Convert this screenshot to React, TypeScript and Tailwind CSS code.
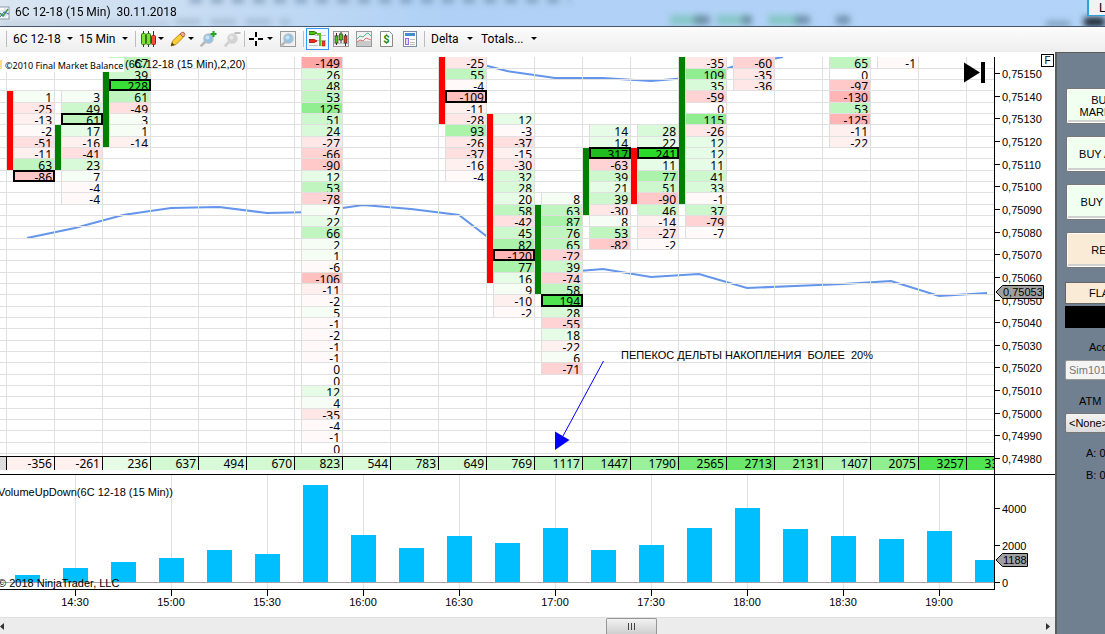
import React from 'react';

interface Footprint {
    col: number;
    start: number;
    values: number[];
    poc?: number;
    body?: { from: number; to: number; up: boolean };
}

const COL_X = 6;
const COL_W = 48;
const AXIS_X = 994;

const colX = (col: number) => COL_X + col * COL_W;
const rowY = (row: number) => Math.floor(68.32 + 11.33 * (row - 1));

const footprints: Footprint[] = [
    { col: 0, start: 3, values: [1, -25, -13, -2, -51, -11, 63, -86], poc: 10, body: { from: 3, to: 9, up: false } },
    { col: 1, start: 3, values: [3, 49, 61, 17, -16, -41, 23, 7, -4, -4], poc: 5, body: { from: 6, to: 9, up: true } },
    { col: 2, start: 0, values: [67, 39, 228, 61, -49, 3, 1, -14], poc: 2, body: { from: 1, to: 7, up: true } },
    {
        col: 6,
        start: 0,
        values: [
            -149, 26, 48, 53, 125, 51, 24, -27, -66, -90, 12, 53, -78, 7, 22, 66, 2, 1, -6, -106, -11, -2, 5, -1, -2, -1, -1, 0, 0, 12, 4, -35, -4,
            -1, 0,
        ],
    },
    { col: 9, start: 0, values: [-25, 55, -4, -109, -11, -28, 93, -26, -37, -16, -4], poc: 3, body: { from: 0, to: 5, up: false } },
    {
        col: 10,
        start: 5,
        values: [12, -3, -37, -15, -30, 32, 28, 20, 58, -42, 45, 82, -120, 77, 16, 9, -10, -2],
        poc: 17,
        body: { from: 5, to: 19, up: false },
    },
    {
        col: 11,
        start: 12,
        values: [8, 63, 87, 76, 65, -72, 39, -74, 58, 194, 28, -55, 18, -22, 6, -71],
        poc: 21,
        body: { from: 13, to: 20, up: true },
    },
    { col: 12, start: 6, values: [14, 14, 317, -63, 39, 21, 39, -30, 8, 53, -82], poc: 8, body: { from: 8, to: 13, up: true } },
    { col: 13, start: 6, values: [28, 22, 241, 11, 77, 51, -90, 46, -14, -27, -2], poc: 8, body: { from: 8, to: 12, up: false } },
    {
        col: 14,
        start: 0,
        values: [-35, 109, 35, -59, 0, 115, -26, 12, 12, 11, 41, 33, -1, 37, -79, -7],
        body: { from: 0, to: 12, up: true },
    },
    { col: 15, start: 0, values: [-60, -35, -36] },
    { col: 17, start: 0, values: [65, 0, -97, -130, 53, -125, -11, -22] },
    { col: 18, start: 0, values: [-1] },
];

const greens: [number, string][] = [
    [300, '#20bc20'],
    [235, '#2ad92a'],
    [210, '#38e038'],
    [150, '#50e650'],
    [100, '#90ee90'],
    [77, '#abf2ab'],
    [53, '#c0f5c0'],
    [37, '#cdf8cd'],
    [23, '#d9fad9'],
    [10, '#e6fce6'],
    [1, '#f5fdf5'],
];

const reds: [number, string][] = [
    [140, '#ffa6a6'],
    [115, '#ffb5b5'],
    [98, '#ffc0c0'],
    [82, '#ffc9c9'],
    [54, '#ffd3d3'],
    [37, '#ffdfdf'],
    [25, '#ffe7e7'],
    [10, '#fff0f0'],
    [1, '#fff9f9'],
];

const deltaColor = (value: number) => {
    if (value === 0) return '#ffffff';
    const scale = value > 0 ? greens : reds;
    return scale.find(([min]) => Math.abs(value) >= min)![1];
};

const totals: [number, string][] = [
    [-356, '#fff0f0'],
    [-261, '#fff0f0'],
    [236, '#e6fce6'],
    [637, '#d2f9d2'],
    [494, '#d9fad9'],
    [670, '#d2f9d2'],
    [823, '#c6f6c6'],
    [544, '#d9fad9'],
    [783, '#cdf8cd'],
    [649, '#d2f9d2'],
    [769, '#cdf8cd'],
    [1117, '#bbf5bb'],
    [1447, '#a8f2a8'],
    [1790, '#9bf09b'],
    [2565, '#76ea76'],
    [2713, '#6be86b'],
    [2131, '#8eee8e'],
    [1407, '#b4f4b4'],
    [2075, '#90ee90'],
    [3257, '#50e550'],
    [3312, '#50e550'],
];

// top edge of every volume bar, the base line is at 582
const volumeTops = [575, 568, 562, 558, 550, 554, 485, 535, 548, 536, 543, 528, 550, 545, 528, 508, 529, 536, 539, 531, 560];

const times = ['14:30', '15:00', '15:30', '16:00', '16:30', '17:00', '17:30', '18:00', '18:30', '19:00'];

const prices = Array.from({ length: 18 }, (_, i) => ({
    label: `0,${75150 - i * 10}`,
    y: Math.floor(73.5 + i * 22.65),
}));

const averages = [
    '27,238 75,228 123,215 171,208 219,207 267,213 315,212 363,205 411,209 459,215 507,252',
    '480,64 507,71 555,78 603,78 651,81 699,77 735,66 783,57',
    '555,273 603,269 651,277 699,274 747,288 795,286 843,284 891,281 939,296 987,293',
];

const FootprintColumn: React.FC<Footprint> = ({ col, start, values, poc, body }) => {
    const x = colX(col);
    const top = Math.max(57, rowY(start));
    return (
        <g>
            <rect x={x + 7} y={top} width={1} height={rowY(start + values.length) - top} fill="#dedede" />
            {body && (
                <rect
                    x={x + 1}
                    y={Math.max(57, rowY(body.from) + 1)}
                    width={6}
                    height={rowY(body.to + 1) - Math.max(57, rowY(body.from) + 1)}
                    fill={body.up ? '#008000' : '#ff0000'}
                />
            )}
            {values.map((value, i) => {
                const y = rowY(start + i);
                const h = rowY(start + i + 1) - y;
                return (
                    <svg key={i} x={x + 8} y={Math.max(57, y + 1)} width={40} height={y < 57 ? 11 : h - 1}>
                        {value !== 0 && <rect width="40" height="12" fill={deltaColor(value)} />}
                        <text x="38" y="11" textAnchor="end">
                            {value}
                        </text>
                    </svg>
                );
            })}
            {poc !== undefined && (
                <rect x={x + 8} y={rowY(poc) + 1} width={40} height={rowY(poc + 1) - rowY(poc) - 1} fill="none" stroke="#000" strokeWidth="2" />
            )}
        </g>
    );
};

const Chart = () => (
    <svg viewBox="0 52 1055 565" className="block h-auto w-full bg-white font-['Liberation_Sans',Arial,sans-serif] text-[11px]">
        <defs>
            <clipPath id="plot">
                <rect x="0" y="57" width={AXIS_X} height="532" />
            </clipPath>
        </defs>

        <g clipPath="url(#plot)">
            {averages.map((points) => (
                <polyline key={points} points={points} fill="none" stroke="#6495ed" strokeWidth="2" />
            ))}
            <g fill="#e0e0e0">
                {Array.from({ length: 35 }, (_, i) => (
                    <rect key={i} x="0" y={rowY(i + 1)} width={AXIS_X} height="1" />
                ))}
                {totals.map((_, i) => (
                    <rect key={i} x={colX(i)} y="57" width="1" height="399" />
                ))}
                {times.map((time, i) => (
                    <rect key={time} x={75 + i * 96} y="475" width="1" height="114" />
                ))}
            </g>

            <g className="font-['Noto_Sans',sans-serif] text-xs">
                {footprints.map((footprint) => (
                    <FootprintColumn key={footprint.col} {...footprint} />
                ))}

                <rect x="0" y="457" width="6" height="13" fill="#dcdcdc" />
                {totals.map(([value, color], i) => (
                    <g key={i}>
                        <rect x={colX(i)} y="457" width={COL_W} height="13" fill={color} />
                        <rect x={colX(i)} y="457" width="1" height="13" />
                        <text x={colX(i) + 46} y="468" textAnchor="end">
                            {value}
                        </text>
                    </g>
                ))}
            </g>
            <rect x="0" y="456" width={AXIS_X} height="1" />

            {volumeTops.map((y, i) => (
                <rect key={i} x={15 + i * COL_W} y={y} width="25" height={582 - y} fill="#00bfff" />
            ))}
            <rect x="0" y="582" width={AXIS_X} height="1" fill="#a4a4a4" />
        </g>

        <text x="125" y="68">
            (6C 12-18 (15 Min),2,20)
        </text>
        <rect x="0" y="60" width="3" height="9" fill="#ffd98c" />
        <rect x="2" y="58" width="122" height="14" fill="#fff" />
        <text x="5" y="69" className="font-['Noto_Sans',sans-serif] text-[9px]">
            ©2010 Final Market Balance
        </text>
        <text x="-2" y="496">
            VolumeUpDown(6C 12-18 (15 Min))
        </text>
        <text x="-2" y="587">
            © 2018 NinjaTrader, LLC
        </text>

        <text x="621" y="359" xmlSpace="preserve">
            {'ПЕПЕКОС ДЕЛЬТЫ НАКОПЛЕНИЯ  БОЛЕЕ  20%'}
        </text>
        <path d="M603.500 361L563 436" stroke="#0000ff" fill="none" />
        <path d="M555 431.500L569.500 440L555 450Z" fill="#0000ff" />

        {/* jump to last bar */}
        <path d="M964 62.500L980 72.500L964 82.500Z" />
        <rect x="981" y="62" width="4" height="21" />

        {/* axes */}
        <rect x={AXIS_X} y="57" width="1" height="533" />
        <rect x="0" y="589" width={AXIS_X} height="1" />
        <rect x="0" y="474" width="1055" height="1" />
        {prices.map(({ label, y }) => (
            <g key={label}>
                <rect x={AXIS_X} y={y} width="6" height="1" />
                <text x="1002" y={y + 5}>
                    {label}
                </text>
            </g>
        ))}
        {[4000, 2000, 0].map((volume, i) => (
            <g key={volume}>
                <rect x={AXIS_X} y={508 + i * 37} width="6" height="1" />
                <text x="1002" y={513 + i * 37}>
                    {volume}
                </text>
            </g>
        ))}
        {times.map((time, i) => (
            <g key={time}>
                <rect x={75 + i * 96} y="589" width="1" height="7" />
                <text x={75 + i * 96} y="606" textAnchor="middle">
                    {time}
                </text>
            </g>
        ))}

        <path d="M996 292L1002.500 285.500H1043.500V298.500H1002.500Z" fill="#a0a0a0" stroke="#000" />
        <text x="1003" y="296">
            0,75053
        </text>
        <path d="M996 560L1002.500 553.500H1027.500V566.500H1002.500Z" fill="#a0a0a0" stroke="#000" />
        <text x="1003" y="564">
            1188
        </text>

        <rect x="1041.500" y="54.500" width="12" height="12" fill="#fff" stroke="#000" />
        <text x="1047.500" y="64" textAnchor="middle" className="text-[10px]">
            F
        </text>
    </svg>
);

const Caret = () => (
    <svg width="6" height="3" viewBox="0 0 6 3" className="shrink-0">
        <path d="M0 0H6L3 3Z" />
    </svg>
);

const Separator = () => <div className="h-4 w-px shrink-0 bg-[#bdbdbd]" />;

const Glass = () => (
    <>
        <path d="M1.500 14.500L5 11" stroke="#b8b8b8" strokeWidth="2.500" strokeLinecap="round" />
        <circle cx="8.500" cy="7.500" r="4.500" fill="#93c4e8" stroke="#b4bfc8" strokeWidth="1.500" />
        <circle cx="7.500" cy="6.500" r="2" fill="#c8e4f8" />
    </>
);

const CandlesIcon = () => (
    <svg width="15" height="16" viewBox="0 0 15 16">
        <path d="M2.500 0V16M7.500 0V16M12.500 0V16" stroke="#333" />
        <rect x="0.500" y="2.500" width="4" height="11" rx="1" fill="#7be03c" stroke="#2f7d12" />
        <rect x="5.500" y="2.500" width="4" height="11" rx="1" fill="#7be03c" stroke="#2f7d12" />
        <rect x="10.500" y="4.500" width="4" height="9" rx="1" fill="#f0503c" stroke="#94241a" />
    </svg>
);

const PencilIcon = () => (
    <svg width="16" height="16" viewBox="0 0 16 16">
        <path d="M1 15L2.500 10L11 2L14.500 5L6 13.500Z" fill="#fcd034" stroke="#b98a14" />
        <path d="M10 3L11.500 1.500Q13 0.500 14.500 2Q15.500 3.500 14.500 4.500L13 6Z" fill="#f2a58e" stroke="#b06a50" />
        <path d="M1 15L2 11.500L4.500 14Z" fill="#463a20" />
    </svg>
);

const FrameIcon: React.FC<{ children: React.ReactNode }> = ({ children }) => (
    <svg width="16" height="16" viewBox="0 0 16 16">
        <rect x="0.500" y="0.500" width="15" height="15" fill="#f1f1f1" stroke="#9a9a9a" />
        {children}
    </svg>
);

const toolButton = 'flex h-[22px] shrink-0 items-center justify-center';

const Picker: React.FC<{ label: string; value: string }> = ({ label, value }) => (
    <label className="flex shrink-0 items-center gap-1.5">
        <select aria-label={label} className="appearance-none bg-transparent">
            <option>{value}</option>
        </select>
        <Caret />
    </label>
);

const Toolbar = () => (
    <div className="flex h-[25px] items-center overflow-hidden bg-linear-to-b from-[#fcfcfc] to-[#eeeeee] pb-0.5 pl-1.5 font-['Roboto',sans-serif] text-xs">
        <Separator />
        <div className="flex items-center gap-1.5 pr-[7px] pl-1.5">
            <Picker label="Instrument" value="6C 12-18" />
            <Picker label="Interval" value="15 Min" />
        </div>
        <Separator />
        <button aria-label="Chart style" className={`${toolButton} w-[32px] gap-0.5`}>
            <CandlesIcon />
            <Caret />
        </button>
        <button aria-label="Drawing tools" className={`${toolButton} w-[28px] gap-0.5`}>
            <PencilIcon />
            <Caret />
        </button>
        <button aria-label="Zoom in" className={`${toolButton} w-[24px]`}>
            <svg width="17" height="16" viewBox="0 0 17 16">
                <Glass />
                <path d="M13.500 0V6M10.500 3H16.500" stroke="#1da81d" strokeWidth="2" />
            </svg>
        </button>
        <button aria-label="Zoom out" className={`${toolButton} w-[24px] opacity-60 grayscale`}>
            <svg width="17" height="16" viewBox="0 0 17 16">
                <Glass />
                <path d="M10.500 2H16.500" stroke="#999" strokeWidth="2" />
            </svg>
        </button>
        <Separator />
        <button aria-label="Cross hair" className={`${toolButton} w-[32px] gap-1`}>
            <svg width="14" height="14" viewBox="0 0 14 14">
                <path d="M7 0V5M7 9V14M0 7H5M9 7H14" stroke="#000" strokeWidth="2" />
            </svg>
            <Caret />
        </button>
        <button aria-label="Zoom window" className={`${toolButton} w-[22px]`}>
            <FrameIcon>
                <Glass />
            </FrameIcon>
        </button>
        <div className="flex pr-[2px] pl-1">
            <Separator />
        </div>
        <button aria-label="Chart trader" className={`${toolButton} w-[23px] border border-[#3399ff] bg-[#f3f9ff]`}>
            <svg width="17" height="16" viewBox="0 0 17 16">
                <path d="M6 4.500H17M6 9.500H17M0 14.500H9" stroke="#c4c4c4" />
                <path d="M0 0.500H5L8 2L5 3.500H0Z" fill="#52c41a" stroke="#2d7a0c" />
                <path d="M0 8.500H5L8 10L5 11.500H0Z" fill="#e8321e" stroke="#b0241a" />
                <path d="M8 3H11V15" fill="none" stroke="#5cc81e" strokeWidth="2" />
                <rect x="13" y="10" width="3" height="5" fill="#e2402c" stroke="#8e1a10" strokeWidth="0.500" />
            </svg>
        </button>
        <button aria-label="Chart trader bars" className={`${toolButton} w-[23px]`}>
            <FrameIcon>
                <path d="M1 4.500H15M1 8.500H15M1 12.500H15" stroke="#c8c8c8" />
                <path d="M3.500 2V14M8 1V12M12.500 3V15" stroke="#333" />
                <rect x="2" y="5" width="3" height="7" fill="#52c41a" stroke="#222" strokeWidth="0.600" />
                <rect x="6.500" y="3" width="3" height="6" fill="#52c41a" stroke="#222" strokeWidth="0.600" />
                <rect x="11" y="5" width="3" height="7" fill="#e2402c" stroke="#222" strokeWidth="0.600" />
            </FrameIcon>
        </button>
        <button aria-label="Indicators" className={`${toolButton} w-[23px]`}>
            <FrameIcon>
                <rect x="1" y="10" width="14" height="5" fill="#c9c9c9" />
                <path d="M1 8L4 5L7 6L10 3L12 2L15 5" fill="none" stroke="#55b58a" />
                <path d="M1 11L4 9L7 10L10 7L15 9" fill="none" stroke="#e07070" />
            </FrameIcon>
        </button>
        <button aria-label="Strategies" className={`${toolButton} w-[23px]`}>
            <svg width="13" height="16" viewBox="0 0 13 16">
                <path d="M0.500 0.500H9.500L12.500 3.500V15.500H0.500Z" fill="#fff" stroke="#8a8a8a" />
                <text x="6.500" y="12" textAnchor="middle" fill="#168a16" className="text-[11px] font-bold">
                    $
                </text>
            </svg>
        </button>
        <button aria-label="Properties" className={`${toolButton} w-[23px]`}>
            <svg width="14" height="16" viewBox="0 0 14 16">
                <rect x="0.500" y="0.500" width="13" height="15" fill="#fff" stroke="#7a8ca4" />
                <rect x="2" y="2" width="10" height="3" fill="#3f8fd0" />
                <rect x="2.500" y="7.500" width="3" height="6" fill="#e6dcff" stroke="#8f6cf0" />
                <path d="M7 8.500H12M7 11.500H12M7 13.500H12" stroke="#c0c0c0" />
            </svg>
        </button>
        <div className="flex pr-1.5 pl-[3px]">
            <Separator />
        </div>
        <div className="flex items-center gap-2">
            <label className="flex shrink-0 items-center gap-2">
                <select aria-label="Delta mode" className="appearance-none bg-transparent">
                    <option>Delta</option>
                </select>
                <Caret />
            </label>
            <button className="flex shrink-0 items-center gap-2">
                Totals...
                <Caret />
            </button>
        </div>
    </div>
);

const TitleBar = () => (
    <header className="relative flex h-[27px] items-center overflow-hidden border-b border-[#45556b] bg-linear-to-r from-[#dbe6f1] via-[#b0d1f5] via-40% to-[#b3d4f8] font-['Roboto',sans-serif] text-xs">
        <svg className="absolute inset-0 h-full w-full" viewBox="0 0 1105 26" preserveAspectRatio="none">
            <defs>
                <filter id="haze" x="-20%" y="-100%" width="140%" height="300%">
                    <feGaussianBlur stdDeviation="3" />
                </filter>
            </defs>
            <g filter="url(#haze)">
                <path d="M175 22H290" stroke="#6d8299" strokeWidth="5" opacity="0.400" strokeDasharray="26 9" />
                <path d="M0 24H170" stroke="#6d8299" strokeWidth="4" opacity="0.300" />
                <path d="M190 0H570" stroke="#54718c" strokeWidth="6" opacity="0.550" strokeDasharray="12 9" />
                <path d="M670 20H705M716 20H750M768 20H800" stroke="#7cc4bc" strokeWidth="10" opacity="0.800" />
                <path d="M694 20H710M742 20H752M795 20H810M836 20H850" stroke="#5b7893" strokeWidth="9" opacity="0.700" />
                <path d="M1084 22H1105" stroke="#16202c" strokeWidth="9" />
                <path d="M1046 24H1070" stroke="#5b7893" strokeWidth="6" opacity="0.600" />
            </g>
        </svg>
        <svg width="10" height="14" viewBox="0 0 10 14" className="relative shrink-0">
            <rect x="-4" y="1" width="13" height="12" fill="#fff" stroke="#8a97a8" />
            <path d="M0 5H9M0 9H9M5 1V13" stroke="#c6cfdb" />
            <path d="M0 7L3 10L8 3" fill="none" stroke="#3aa043" strokeWidth="1.500" />
            <path d="M0 11L4 6L9 8" fill="none" stroke="#3b62c4" />
        </svg>
        <h1 className="relative pb-0.5 pl-[5px] whitespace-pre">{'6C 12-18 (15 Min)  30.11.2018'}</h1>
        <button className="absolute top-0 right-0 h-4 w-[18px] overflow-hidden border-b border-l-2 border-[#2ba3d8] bg-[#f0f2f5] pl-2.5 text-left leading-[14px]">
            L
        </button>
    </header>
);

const orderButton = 'h-9 shrink-0 rounded-xs border border-[#777] text-center leading-3 shadow-[inset_0_0_0_1px_#fff,inset_-1px_-1px_0_2px_#d0d0d0]';

// only the left edge of the trader fits beside the chart
const ChartTrader = () => (
    <aside className="w-[50px] shrink-0 overflow-hidden border-t border-l-2 border-[#5c5c5c] bg-[#708090] font-['Liberation_Sans',Arial,sans-serif] text-[11px]">
        <div className="flex w-[82px] flex-col pt-[35px] pl-2">
            <div className="flex flex-col gap-3 pb-3.5 pl-px">
                <button className={`${orderButton} bg-[#f0fff0]`}>
                    BUY
                    <br />
                    MARKET
                </button>
                <button className={`${orderButton} bg-[#f0fff0]`}>BUY ASK</button>
                <button className={`${orderButton} bg-[#f0fff0]`}>BUY BID</button>
                <button className={`${orderButton} bg-[#faebd7]`}>REV</button>
            </div>
            <button className="h-[22px] border border-[#666] bg-[#faebd7]">FLAT</button>
            <div className="mt-0.5 h-[22px] bg-black" />
            <label htmlFor="account" className="pt-3 pl-6 leading-[14px]">
                Account
            </label>
            <select id="account" className="mt-1.5 h-5 appearance-none rounded-xs border border-[#999] bg-[#f4f4f4] pl-[3px] text-[#777]">
                <option>Sim101</option>
            </select>
            <label htmlFor="strategy" className="pt-3.5 pl-3.5 leading-[14px] whitespace-nowrap">
                ATM Strategy
            </label>
            <select
                id="strategy"
                className="mt-[5px] h-5 appearance-none rounded-xs border border-[#777] bg-linear-to-b from-[#f4f4f4] to-[#dcdcdc] pl-[3px]"
            >
                <option>&lt;None&gt;</option>
            </select>
            <div className="pt-[9px] pl-[21px] leading-[22px]">
                <p>A: 0</p>
                <p>B: 0</p>
            </div>
        </div>
    </aside>
);

const ScrollBar = () => (
    <div className="flex h-[17px] items-center border-t border-[#e0e0e0] bg-[#ececec]">
        <button aria-label="Scroll left" className="flex w-[11px] shrink-0">
            <svg width="4" height="7" viewBox="0 0 4 7">
                <path d="M4 0V7L0 3.500Z" fill="#333" />
            </svg>
        </button>
        <div className="flex h-full flex-1">
            <div className="w-[57.5%]" />
            <button
                aria-label="Scroll position"
                className="flex w-[51px] items-center justify-center gap-0.5 rounded-t-xs border border-b-0 border-[#979797] bg-linear-to-b from-[#f2f2f2] to-[#cfcfcf]"
            >
                <span className="h-[7px] w-px bg-[#444]" />
                <span className="h-[7px] w-px bg-[#444]" />
                <span className="h-[7px] w-px bg-[#444]" />
            </button>
        </div>
        <button aria-label="Scroll right" className="flex w-[9px] shrink-0">
            <svg width="4" height="7" viewBox="0 0 4 7">
                <path d="M0 0V7L4 3.500Z" fill="#333" />
            </svg>
        </button>
    </div>
);

const App = () => {
    return (
        <div className="flex min-h-screen flex-col overflow-hidden bg-white text-black">
            <TitleBar />
            <Toolbar />
            <main className="flex flex-1">
                <div className="flex min-w-0 flex-1 flex-col justify-between">
                    <Chart />
                    <ScrollBar />
                </div>
                <ChartTrader />
            </main>
        </div>
    );
};

export default App;
